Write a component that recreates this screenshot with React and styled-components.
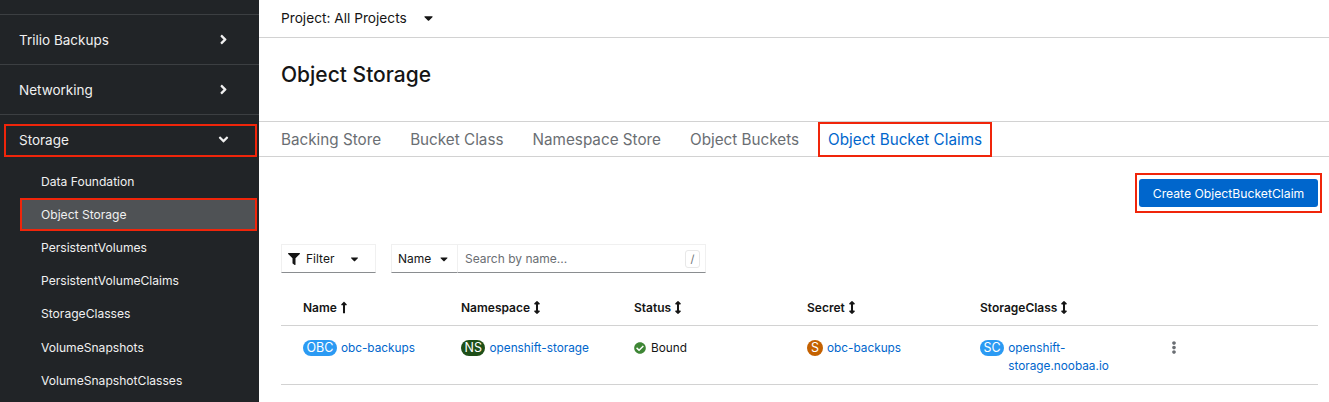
import styled, { createGlobalStyle } from "styled-components";
import {
    FaAngleDown,
    FaAngleRight,
    FaArrowsAltV,
    FaCaretDown,
    FaCheckCircle,
    FaEllipsisV,
    FaFilter,
    FaLongArrowAltUp,
} from "react-icons/fa";

const FONT = 'Inter, "Noto Sans", sans-serif';
const RED = "#f0250a";

const subItems = [
    "Data Foundation",
    "Object Storage",
    "PersistentVolumes",
    "PersistentVolumeClaims",
    "StorageClasses",
    "VolumeSnapshots",
    "VolumeSnapshotClasses",
];
const tabs = ["Backing Store", "Bucket Class", "Namespace Store", "Object Buckets", "Object Bucket Claims"];
const columns = [
    { label: "Name", sorted: true },
    { label: "Namespace" },
    { label: "Status" },
    { label: "Secret" },
    { label: "StorageClass" },
];

const App = () => {
    return <Page>
        <GlobalStyle />
        <Sidebar>
            <NavGroup>
                <NavLabel>Trilio Backups</NavLabel>
                <FaAngleRight />
            </NavGroup>
            <NavGroup>
                <NavLabel>Networking</NavLabel>
                <FaAngleRight />
            </NavGroup>
            <NavGroup $open>
                <NavLabel>Storage</NavLabel>
                <FaAngleDown />
            </NavGroup>
            <SubList>
                {subItems.map((item) => (
                    <SubItem key={item} $active={item === "Object Storage"}>{item}</SubItem>
                ))}
            </SubList>
        </Sidebar>
        <Main>
            <ProjectBar>
                Project: All Projects
                <FaCaretDown />
            </ProjectBar>
            <Title>Object Storage</Title>
            <Tabs>
                {tabs.map((tab) => (
                    <Tab key={tab} $active={tab === "Object Bucket Claims"}>{tab}</Tab>
                ))}
            </Tabs>
            <Actions>
                <ButtonFrame>
                    <CreateButton>Create ObjectBucketClaim</CreateButton>
                </ButtonFrame>
            </Actions>
            <Toolbar>
                <FilterToggle>
                    <FaFilter className="funnel" />
                    <span>Filter</span>
                    <FaCaretDown className="caret" />
                </FilterToggle>
                <NameToggle>
                    Name
                    <FaCaretDown />
                </NameToggle>
                <SearchBox>
                    <span>Search by name...</span>
                    <SlashKey>/</SlashKey>
                </SearchBox>
            </Toolbar>
            <Table>
                <HeaderRow>
                    {columns.map((col) => (
                        <HeaderCell key={col.label}>
                            {col.label}
                            {col.sorted ? <FaLongArrowAltUp /> : <FaArrowsAltV />}
                        </HeaderCell>
                    ))}
                    <span />
                </HeaderRow>
                <BodyRow>
                    <Cell>
                        <Badge $color="#2b9af3">OBC</Badge>
                        <ResourceLink>obc-backups</ResourceLink>
                    </Cell>
                    <Cell>
                        <Badge $color="#1e4f18">NS</Badge>
                        <ResourceLink>openshift-storage</ResourceLink>
                    </Cell>
                    <Cell>
                        <BoundIcon />
                        <StatusText>Bound</StatusText>
                    </Cell>
                    <Cell>
                        <Badge $color="#c46100">S</Badge>
                        <ResourceLink>obc-backups</ResourceLink>
                    </Cell>
                    <Cell>
                        <Badge $color="#2b9af3">SC</Badge>
                        <ResourceLink>openshift-<br />storage.noobaa.io</ResourceLink>
                    </Cell>
                    <Kebab><FaEllipsisV /></Kebab>
                </BodyRow>
            </Table>
        </Main>
    </Page>
}

const GlobalStyle = createGlobalStyle`
    html, body {
        margin: 0;
        padding: 0;
        background: #fff;
    }
    body {
        font-family: ${FONT};
    }
    * {
        box-sizing: border-box;
    }
`
const Page = styled.div`
    display: flex;
    width: 1329px;
    height: 402px;
    overflow: hidden;
`
const Sidebar = styled.nav`
    flex: 0 0 259px;
    background: #212427;
    padding-top: 14px;
    overflow: hidden;
`
const NavGroup = styled.div`
    position: relative;
    display: flex;
    align-items: center;
    justify-content: space-between;
    height: 50px;
    padding: 0 29px 0 19px;
    color: #f0f0f0;
    border-top: 1px solid #3c3f42;
    svg {
        width: 13px;
        height: 15px;
    }
    ${(p) => p.$open && `
        &::after {
            content: "";
            position: absolute;
            left: 4px;
            right: 2px;
            top: 9px;
            bottom: 7px;
            border: 2px solid ${RED};
        }
    `}
`
const NavLabel = styled.span`
    font-size: 13.5px;
`
const SubList = styled.div`
    display: flex;
    flex-direction: column;
    margin-top: 1px;
`
const SubItem = styled.div`
    position: relative;
    display: flex;
    align-items: center;
    height: 33.2px;
    margin-left: 20px;
    padding: 0 0 1px 21px;
    font-size: 12.1px;
    color: #f0f0f0;
    background: ${(p) => (p.$active ? "#4f5255" : "transparent")};
    ${(p) => p.$active && `
        margin-right: 2px;
        border: 2px solid ${RED};
        padding-left: 19px;
    `}
`
const Main = styled.main`
    flex: 1;
    min-width: 0;
    color: #151515;
`
const ProjectBar = styled.div`
    display: flex;
    align-items: center;
    height: 38px;
    padding: 0 0 1px 22px;
    font-size: 13.7px;
    border-bottom: 1px solid #d2d2d2;
    svg {
        margin-left: 16px;
        width: 11px;
        height: 14px;
    }
`
const Title = styled.h1`
    display: flex;
    align-items: center;
    height: 83px;
    margin: 0;
    padding: 0 0 10px 22px;
    font-size: 21px;
    font-weight: 500;
    color: #151515;
`
const Tabs = styled.div`
    display: flex;
    align-items: center;
    gap: 29px;
    height: 36px;
    padding-left: 22px;
    border-top: 1px solid #d2d2d2;
    border-bottom: 1px solid #d2d2d2;
`
const Tab = styled.div`
    position: relative;
    font-size: 15.25px;
    color: ${(p) => (p.$active ? "#0066cc" : "#6a6e73")};
    ${(p) => p.$active && `
        &::after {
            content: "";
            position: absolute;
            left: -10px;
            right: -10px;
            top: -8px;
            bottom: -8px;
            border: 2px solid ${RED};
        }
    `}
`
const Actions = styled.div`
    display: flex;
    justify-content: flex-end;
    padding: 16px 7px 0 0;
`
const ButtonFrame = styled.div`
    padding: 4px 2px;
    border: 2px solid ${RED};
`
const CreateButton = styled.button`
    display: block;
    width: 179px;
    height: 28px;
    padding: 0;
    border: 0;
    border-radius: 3px;
    background: #0066cc;
    color: #fff;
    font-family: ${FONT};
    font-size: 12.2px;
`
const Toolbar = styled.div`
    display: flex;
    height: 29px;
    margin: 31px 0 0 22px;
    font-size: 12px;
`
const FilterToggle = styled.div`
    display: flex;
    align-items: center;
    width: 95px;
    padding-left: 6px;
    margin-right: 15px;
    border: 1px solid #f0f0f0;
    border-bottom-color: #8a8d90;
    color: #151515;
    .funnel {
        width: 12px;
        height: 12px;
        margin-right: 6px;
    }
    .caret {
        width: 9px;
        height: 12px;
        margin-left: 16px;
    }
`
const NameToggle = styled.div`
    display: flex;
    align-items: center;
    width: 67px;
    padding-left: 6px;
    border: 1px solid #f0f0f0;
    border-bottom-color: #8a8d90;
    svg {
        width: 8px;
        height: 12px;
        margin-left: 9px;
    }
`
const SearchBox = styled.div`
    display: flex;
    align-items: center;
    justify-content: space-between;
    width: 248px;
    padding: 0 5px 0 7px;
    border: 1px solid #f0f0f0;
    border-left: 0;
    border-bottom-color: #8a8d90;
    color: #6a6e73;
`
const SlashKey = styled.span`
    display: flex;
    align-items: center;
    justify-content: center;
    width: 15px;
    height: 18px;
    border: 1px solid #e8e8e8;
    border-radius: 3px;
    font-size: 11px;
`
const Table = styled.div`
    margin: 16px 11px 0 22px;
`
const HeaderRow = styled.div`
    display: grid;
    grid-template-columns: 158px 173px 173px 173px 193px 1fr;
    align-items: center;
    height: 37px;
    padding-left: 22px;
    border-bottom: 1px solid #d2d2d2;
`
const HeaderCell = styled.div`
    display: flex;
    align-items: center;
    gap: 3px;
    font-size: 12px;
    font-weight: 600;
    color: #151515;
    svg {
        width: 8px;
        height: 13px;
    }
`
const BodyRow = styled.div`
    display: grid;
    grid-template-columns: 158px 173px 173px 173px 193px 1fr;
    height: 59px;
    padding: 13px 0 0 22px;
    border-bottom: 1px solid #d2d2d2;
`
const Cell = styled.div`
    display: flex;
    align-items: flex-start;
    gap: 4px;
    font-size: 11.8px;
    line-height: 18px;
`
const Badge = styled.span`
    flex: none;
    display: flex;
    align-items: center;
    justify-content: center;
    min-width: 16px;
    height: 16px;
    margin-top: 1px;
    padding: 0 3.5px;
    border-radius: 8px;
    background: ${(p) => p.$color};
    color: #fff;
    font-size: 12.5px;
`
const ResourceLink = styled.span`
    color: #0066cc;
`
const BoundIcon = styled(FaCheckCircle)`
    flex: none;
    width: 12px;
    height: 12px;
    margin: 3px 1px 0 0;
    color: #3e8635;
`
const StatusText = styled.span`
    color: #151515;
`
const Kebab = styled.div`
    color: #6a6e73;
    line-height: 18px;
    svg {
        width: 10px;
        height: 13px;
        display: block;
        margin-top: 2px;
        margin-left: -4px;
    }
`

export default App;
